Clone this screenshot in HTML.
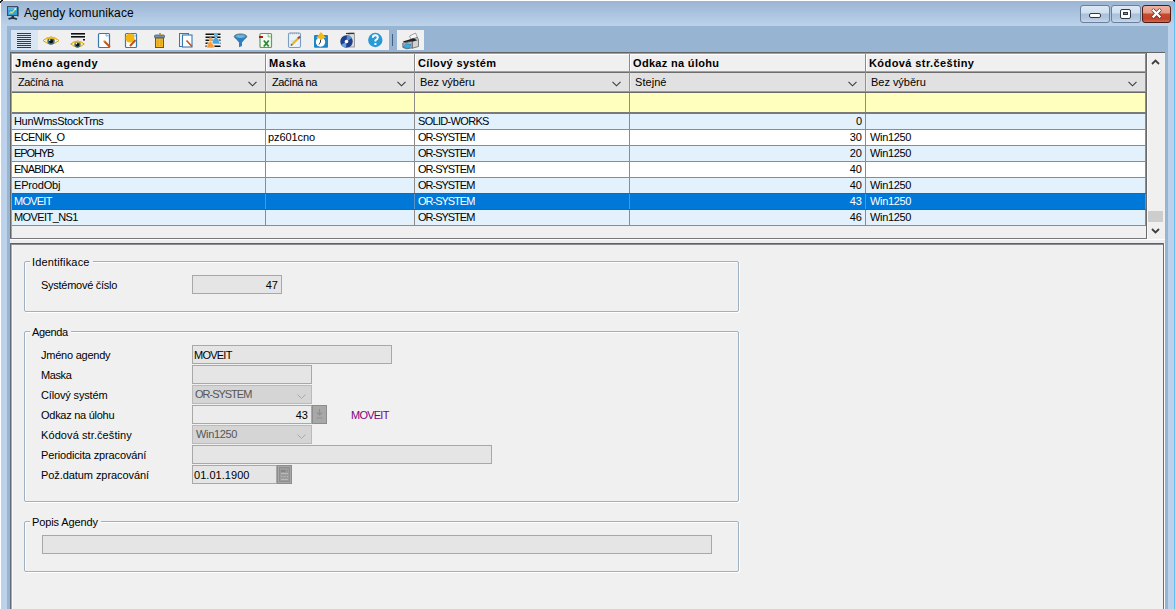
<!DOCTYPE html>
<html><head><meta charset="utf-8">
<style>
*{margin:0;padding:0;box-sizing:border-box}
html,body{width:1175px;height:609px;overflow:hidden;background:#fff}
body{position:relative;font-family:"Liberation Sans",sans-serif;font-size:11px;color:#000}
.a{position:absolute}
svg.a{overflow:visible}
.t{position:absolute;white-space:nowrap;line-height:13px;letter-spacing:-0.15px}
.b{font-weight:bold;letter-spacing:0.4px}
.wb{position:absolute;top:5px;height:18px;border:1px solid #6a7f99;border-radius:3px;background:linear-gradient(#dde8f4,#cfdff0 7px,#a9c0da 8px,#b4c9e0 13px,#c6d8ec)}
.tb{position:absolute;top:30px;height:20px;background:#f0f0f0}
.grp{position:absolute;border:1px solid #9fb0c3;border-radius:2px;box-shadow:inset 1px 1px 0 #fbfdff,1px 1px 0 #fff}
.lg{position:absolute;background:#f0f0f0;padding:0 2px 0 2px;white-space:nowrap;line-height:13px;letter-spacing:-0.15px}
.fld{position:absolute;border:1px solid #a8a8a8;background:#e5e5e5;height:19px}
.cmb{position:absolute;border:1px solid #bababa;background:#d5d5d5;height:19px}
.btn{position:absolute;border:1px solid #8d8d8d;background:#a8a8a8;height:19px}
</style></head><body>

<div class="a" style="left:0px;top:0px;width:1175px;height:609px;background:#fff"></div>
<div class="a" style="left:1px;top:1px;width:1174px;height:608px;background:linear-gradient(#a9b9cb,#9bb5d3 1px,#a5bedb 8px,#bdd3eb 25px,#bcd2ea 26px)"></div>
<div class="a" style="left:0px;top:1px;width:1px;height:2px;background:#111"></div>
<div class="a" style="left:1px;top:0px;width:2px;height:1px;background:#111"></div>
<div class="a" style="left:1px;top:1px;width:1px;height:1px;background:#333"></div>
<div class="a" style="left:1173px;top:0px;width:2px;height:1px;background:#111"></div>
<div class="a" style="left:1174px;top:1px;width:1px;height:1px;background:#333"></div>
<div class="a" style="left:1174px;top:2px;width:1px;height:607px;background:#5cc3f0"></div>
<div class="a" style="left:7px;top:26px;width:1161px;height:583px;background:#98b4d3"></div>
<svg class="a" style="left:7px;top:6px" width="12" height="14" viewBox="0 0 12 14">
<rect x="0.5" y="0.5" width="10" height="9" fill="#3a9fd3" stroke="#3c4e62"/>
<rect x="1" y="1" width="9" height="3" fill="#57b2e0"/>
<path d="M2.5 7.5L4 6L5 7L8 3.5" stroke="#c4dc8a" stroke-width="1.3" fill="none"/>
<circle cx="8.3" cy="3" r="0.9" fill="#e8f4ff"/>
<path d="M11 1v9.5" stroke="#33404e" stroke-width="1.2"/>
<rect x="4.5" y="10" width="2.5" height="2" fill="#26313d"/>
<path d="M1.5 13Q5.5 11 10 13.2" stroke="#2a3541" stroke-width="1.8" fill="none"/></svg>
<div class="t" style="left:24px;top:6px;font-size:12px;line-height:14px;letter-spacing:0.1px;color:#000">Agendy komunikace</div>
<div class="wb" style="left:1080px;width:30px"></div>
<div class="a" style="left:1089px;top:13px;width:12px;height:5px;background:#fff;border:1px solid #2f3a48;border-radius:2px"></div>
<div class="wb" style="left:1111px;width:30px"></div>
<div class="a" style="left:1120px;top:9px;width:11px;height:10px;background:#fff;border:1px solid #2f3a48;border-radius:2px"></div>
<div class="a" style="left:1123px;top:12px;width:5px;height:3px;background:#7d8fa6;border:1px solid #2f3a48"></div>
<div class="wb" style="left:1142px;width:29px;border-color:#4a1c12;background:linear-gradient(#eeb2a2,#e39a86 7px,#c84a2e 8px,#c2432a 13px,#d56a52)"></div>
<svg class="a" style="left:1150px;top:8px" width="13" height="11" viewBox="0 0 13 11"><path d="M3.5 2.5L9.5 8.5M9.5 2.5L3.5 8.5" stroke="#4a2018" stroke-width="3.8" stroke-linecap="round"/><path d="M3.5 2.5L9.5 8.5M9.5 2.5L3.5 8.5" stroke="#fff" stroke-width="2.4" stroke-linecap="square"/></svg>
<div class="tb" style="left:11px;width:378px"></div>
<div class="tb" style="left:397px;width:27px"></div>
<div class="a" style="left:11px;top:30px;width:27px;height:20px;background:#d9e5f2"></div>
<div class="a" style="left:392px;top:34px;width:1px;height:12px;background:#3f5f85"></div>
<svg class="a" style="left:0;top:0" width="430" height="52"><rect x="17" y="33" width="14" height="1" fill="#3a3a3a"/><rect x="17" y="35" width="14" height="1" fill="#3a3a3a"/><rect x="17" y="37" width="14" height="1" fill="#3a3a3a"/><rect x="17" y="39" width="14" height="1" fill="#3a3a3a"/><rect x="17" y="41" width="14" height="1" fill="#3a3a3a"/><rect x="17" y="43" width="14" height="1" fill="#3a3a3a"/><rect x="17" y="45" width="14" height="1" fill="#3a3a3a"/><rect x="17" y="47" width="14" height="1" fill="#3a3a3a"/><path d="M43.0 40.5Q51 33.5 59.0 40.5Q51 47.5 43.0 40.5Z" fill="#fbf0bf" stroke="#d9a514" stroke-width="1"/><circle cx="51" cy="41.1" r="3.7" fill="#3b6d79"/><circle cx="51" cy="41.3" r="2.0" fill="#07121e"/><path d="M43.5 40.2Q51 33.0 58.5 40.2Q51 37.3 43.5 40.2Z" fill="#f0bd1c"/><circle cx="49.7" cy="40.1" r="0.8" fill="#fff"/><rect x="71" y="33" width="14" height="1.6" fill="#111"/><rect x="71" y="36" width="14" height="1.6" fill="#111"/><rect x="83" y="39" width="2" height="1.5" fill="#111"/><path d="M70.7 44Q77.5 38.05 84.3 44Q77.5 49.95 70.7 44Z" fill="#fbf0bf" stroke="#d9a514" stroke-width="1"/><circle cx="77.5" cy="44.51" r="3.145" fill="#3b6d79"/><circle cx="77.5" cy="44.68" r="1.7" fill="#07121e"/><path d="M71.2 43.7Q77.5 37.55 83.8 43.7Q77.5 41.28 71.2 43.7Z" fill="#f0bd1c"/><circle cx="76.395" cy="43.6" r="0.8" fill="#fff"/><rect x="98.5" y="33.5" width="11" height="14" rx="1" fill="#fdfeff" stroke="#3b78ac" stroke-width="1.2"/><path d="M106 34v2h3" fill="#8fc3e8" stroke="#8fc3e8"/><path d="M104 41L110 47" stroke="#c0541a" stroke-width="2"/><path d="M103.5 40.5l1 1" stroke="#f1b98c" stroke-width="2"/><rect x="125.5" y="33.5" width="11" height="14" rx="1" fill="#fdfeff" stroke="#3b78ac" stroke-width="1.2"/><path d="M133 34v2h3" fill="#8fc3e8" stroke="#8fc3e8"/><circle cx="130" cy="38" r="4.5" fill="#f2b60f"/><path d="M135.5 40L130 46" stroke="#c0541a" stroke-width="2"/><rect x="154.5" y="35" width="10" height="3" rx="1" fill="#6f8fae" stroke="#4b6580" stroke-width="0.8"/><rect x="159" y="33" width="2" height="2" fill="#c99c2a"/><rect x="155.5" y="38" width="8" height="9.5" fill="#f2b928" stroke="#4e5a63" stroke-width="1"/><path d="M158 39.5v6.5M161 39.5v6.5" stroke="#d8971a" stroke-width="0.8"/><rect x="179.5" y="33.5" width="9" height="13" fill="#eaf4fb" stroke="#3b78ac"/><rect x="182.5" y="35" width="9.5" height="12" fill="#fdfeff" stroke="#3b78ac" stroke-width="1.1"/><path d="M186.5 40.5L192 46.5" stroke="#c0541a" stroke-width="1.6"/><rect x="205.5" y="33.5" width="15" height="1.5" fill="#111"/><rect x="205.5" y="36.5" width="15" height="1.5" fill="#111"/><rect x="205.5" y="39.5" width="15" height="1.5" fill="#111"/><rect x="205.5" y="42.5" width="15" height="1.5" fill="#111"/><rect x="205.5" y="45.5" width="15" height="1.5" fill="#111"/><path d="M206.6 48Q206.6 42.6 210.5 41.2Q214.4 42.6 214.4 48Z" fill="#f59b38" stroke="#fff" stroke-width="0.6"/><circle cx="210.5" cy="39.3" r="2" fill="#f7a84c"/><path d="M212 43.8Q212 38.4 215.9 37Q219.8 38.4 219.8 43.8Z" fill="#48a4dc" stroke="#fff" stroke-width="0.6"/><circle cx="215.9" cy="34.8" r="2" fill="#66b8e8"/><ellipse cx="240.5" cy="36.5" rx="6.3" ry="2.6" fill="#3d8ac4" stroke="#5b7a6a" stroke-width="0.8"/><path d="M234.2 37L239 42.5V47.2L242 46V42.5L246.8 37Z" fill="#2f7fc0"/><ellipse cx="240.5" cy="36.5" rx="4.5" ry="1.4" fill="#6ab4e6"/><rect x="260" y="33.5" width="11.5" height="14" rx="1" fill="#f4fbf3" stroke="#5f9e5c" stroke-width="1.2"/><rect x="259" y="36" width="4" height="2" fill="#b0161a"/><path d="M263.8 40.5L268.8 46.5M268.8 40.5L263.8 46.5" stroke="#2a8a34" stroke-width="1.8"/><path d="M268 34v3h3" fill="#bfe0bc" stroke="#8fc08c" stroke-width="0.8"/><rect x="288.5" y="33" width="12" height="14.5" rx="1.5" fill="#e9f3fb" stroke="#7c9cc4" stroke-width="1.1"/><path d="M290 33.5h9" stroke="#9aa6b4" stroke-width="1.4" stroke-dasharray="1 1"/><path d="M292 44.5L298.5 38" stroke="#e8b41c" stroke-width="2.2"/><path d="M298 38.5L300 36.5" stroke="#a8482a" stroke-width="2.2"/><path d="M291 45.5L292.2 44.3" stroke="#555" stroke-width="1.6"/><path d="M290.5 41h4M290.5 43.5h2" stroke="#b8cce0" stroke-width="0.8"/><rect x="314" y="35" width="14" height="12.8" rx="1" fill="#1f86c4"/><circle cx="320.5" cy="42" r="4.7" fill="#fff"/><path d="M320.5 42L319 44.5M320.5 42v-2.5" stroke="#223" stroke-width="0.9"/><path d="M321 32L326 38L323 38L322 40L318 38L316 38Z" fill="#f3b91a"/><rect x="349" y="33" width="5.5" height="14" fill="#dcdcdc" stroke="#8a8a8a" stroke-width="0.8"/><path d="M346 33.5h8" stroke="#333" stroke-width="1.2"/><circle cx="346.5" cy="41.5" r="6.2" fill="#1f3f8a"/><path d="M346.5 41.5L352 38A6.2 6.2 0 0 0 347 35.3Z" fill="#5a8fd0"/><path d="M346.5 41.5L341 45A6.2 6.2 0 0 0 346 47.7Z" fill="#6aa0e0"/><circle cx="346.5" cy="41.5" r="1.8" fill="#fff"/><circle cx="375.3" cy="40" r="7.2" fill="#2a9ad6"/><path d="M372.8 37.8Q372.8 35.3 375.3 35.3Q377.8 35.3 377.8 37.6Q377.8 39.2 375.4 40.3V41.6" stroke="#fff" stroke-width="1.9" fill="none"/><rect x="374.4" y="43" width="2" height="2" fill="#fff"/><path d="M409.5 36L415.5 33L417.5 37.5L411.5 40.5Z" fill="#f7f7f7" stroke="#8c8c8c" stroke-width="0.8"/><path d="M411.5 39L417.5 37.5L418.5 40V46.5L412 48.3Z" fill="#cfd3d5" stroke="#5f6468" stroke-width="0.8"/><path d="M402.7 41.5L413.5 38.2L417.5 40.2L406.5 43.6Z" fill="#222"/><path d="M402.8 43L412.3 41.2V47.8L406.5 48.8L402.8 47.4Z" fill="#b1b6ba" stroke="#555a5e" stroke-width="0.8"/><path d="M403.2 47L405.8 43.8L411.2 44.6L408.6 48.6Z" fill="#37aee5" stroke="#1d6d98" stroke-width="0.5"/></svg>
<div class="a" style="left:10px;top:51px;width:1155px;height:189px;background:#f0f0f0"></div>
<div class="a" style="left:10px;top:51px;width:1155px;height:1px;background:#98b4d3"></div>
<div class="a" style="left:10px;top:52px;width:1155px;height:1px;background:#646464"></div>
<div class="a" style="left:11px;top:53px;width:1154px;height:1px;background:#a0a0a0"></div>
<div class="a" style="left:10px;top:52px;width:1px;height:187px;background:#646464"></div>
<div class="a" style="left:11px;top:53px;width:1px;height:186px;background:#a0a0a0"></div>
<div class="a" style="left:1146px;top:53px;width:1px;height:186px;background:#6a6a6a"></div>
<div class="a" style="left:1147px;top:53px;width:1px;height:185px;background:#fafafa"></div>
<div class="a" style="left:10px;top:238px;width:1137px;height:1px;background:#77777c"></div>
<div class="a" style="left:10px;top:239px;width:1155px;height:1px;background:#fdfdfd"></div>
<div class="a" style="left:10px;top:240px;width:1155px;height:3px;background:#ededf0"></div>
<div class="a" style="left:12px;top:54px;width:253px;height:17px;background:#f0f0f0;border-top:1px solid #fff;border-left:1px solid #fff"></div>
<div class="a" style="left:12px;top:71px;width:254px;height:1px;background:#a0a0a0"></div>
<div class="a" style="left:12px;top:72px;width:254px;height:1px;background:#6e6e6e"></div>
<div class="a" style="left:265px;top:54px;width:1px;height:19px;background:#8a8a8a"></div>
<div class="t" style="left:15px;top:57px;font-weight:bold;;letter-spacing:0.51px">Jméno agendy</div>
<div class="a" style="left:12px;top:73px;width:253px;height:18px;background:#e1e1e1;border-left:1px solid #ececec"></div>
<div class="a" style="left:12px;top:91px;width:254px;height:1px;background:#9a9a9a"></div>
<div class="a" style="left:12px;top:92px;width:254px;height:1px;background:#6a6a6a"></div>
<div class="a" style="left:265px;top:73px;width:1px;height:19px;background:#8f8f9a"></div>
<div class="t" style="left:18px;top:76px;;letter-spacing:-0.44px">Začíná na</div>
<svg class="a" style="left:248px;top:81px" width="10" height="6"><path d="M0.5 0.8L4.5 4.8L8.5 0.8" stroke="#3a3a3a" stroke-width="1.1" fill="none"/></svg>
<div class="a" style="left:12px;top:93px;width:253px;height:19px;background:#ffffbe"></div>
<div class="a" style="left:265px;top:93px;width:1px;height:19px;background:#8c8c8c"></div>
<div class="a" style="left:266px;top:54px;width:148px;height:17px;background:#f0f0f0;border-top:1px solid #fff;border-left:1px solid #fff"></div>
<div class="a" style="left:266px;top:71px;width:149px;height:1px;background:#a0a0a0"></div>
<div class="a" style="left:266px;top:72px;width:149px;height:1px;background:#6e6e6e"></div>
<div class="a" style="left:414px;top:54px;width:1px;height:19px;background:#8a8a8a"></div>
<div class="t" style="left:269px;top:57px;font-weight:bold;;letter-spacing:0.7px">Maska</div>
<div class="a" style="left:266px;top:73px;width:148px;height:18px;background:#e1e1e1;border-left:1px solid #ececec"></div>
<div class="a" style="left:266px;top:91px;width:149px;height:1px;background:#9a9a9a"></div>
<div class="a" style="left:266px;top:92px;width:149px;height:1px;background:#6a6a6a"></div>
<div class="a" style="left:414px;top:73px;width:1px;height:19px;background:#8f8f9a"></div>
<div class="t" style="left:272px;top:76px;;letter-spacing:-0.44px">Začíná na</div>
<svg class="a" style="left:397px;top:81px" width="10" height="6"><path d="M0.5 0.8L4.5 4.8L8.5 0.8" stroke="#3a3a3a" stroke-width="1.1" fill="none"/></svg>
<div class="a" style="left:266px;top:93px;width:148px;height:19px;background:#ffffbe"></div>
<div class="a" style="left:414px;top:93px;width:1px;height:19px;background:#8c8c8c"></div>
<div class="a" style="left:415px;top:54px;width:214px;height:17px;background:#f0f0f0;border-top:1px solid #fff;border-left:1px solid #fff"></div>
<div class="a" style="left:415px;top:71px;width:215px;height:1px;background:#a0a0a0"></div>
<div class="a" style="left:415px;top:72px;width:215px;height:1px;background:#6e6e6e"></div>
<div class="a" style="left:629px;top:54px;width:1px;height:19px;background:#8a8a8a"></div>
<div class="t" style="left:418px;top:57px;font-weight:bold;;letter-spacing:0.34px">Cílový systém</div>
<div class="a" style="left:415px;top:73px;width:214px;height:18px;background:#e1e1e1;border-left:1px solid #ececec"></div>
<div class="a" style="left:415px;top:91px;width:215px;height:1px;background:#9a9a9a"></div>
<div class="a" style="left:415px;top:92px;width:215px;height:1px;background:#6a6a6a"></div>
<div class="a" style="left:629px;top:73px;width:1px;height:19px;background:#8f8f9a"></div>
<div class="t" style="left:420px;top:76px;;letter-spacing:-0.03px">Bez výběru</div>
<svg class="a" style="left:612px;top:81px" width="10" height="6"><path d="M0.5 0.8L4.5 4.8L8.5 0.8" stroke="#3a3a3a" stroke-width="1.1" fill="none"/></svg>
<div class="a" style="left:415px;top:93px;width:214px;height:19px;background:#ffffbe"></div>
<div class="a" style="left:629px;top:93px;width:1px;height:19px;background:#8c8c8c"></div>
<div class="a" style="left:630px;top:54px;width:235px;height:17px;background:#f0f0f0;border-top:1px solid #fff;border-left:1px solid #fff"></div>
<div class="a" style="left:630px;top:71px;width:236px;height:1px;background:#a0a0a0"></div>
<div class="a" style="left:630px;top:72px;width:236px;height:1px;background:#6e6e6e"></div>
<div class="a" style="left:865px;top:54px;width:1px;height:19px;background:#8a8a8a"></div>
<div class="t" style="left:633px;top:57px;font-weight:bold;;letter-spacing:0.32px">Odkaz na úlohu</div>
<div class="a" style="left:630px;top:73px;width:235px;height:18px;background:#e1e1e1;border-left:1px solid #ececec"></div>
<div class="a" style="left:630px;top:91px;width:236px;height:1px;background:#9a9a9a"></div>
<div class="a" style="left:630px;top:92px;width:236px;height:1px;background:#6a6a6a"></div>
<div class="a" style="left:865px;top:73px;width:1px;height:19px;background:#8f8f9a"></div>
<div class="t" style="left:635px;top:76px;;letter-spacing:0.06px">Stejné</div>
<svg class="a" style="left:848px;top:81px" width="10" height="6"><path d="M0.5 0.8L4.5 4.8L8.5 0.8" stroke="#3a3a3a" stroke-width="1.1" fill="none"/></svg>
<div class="a" style="left:630px;top:93px;width:235px;height:19px;background:#ffffbe"></div>
<div class="a" style="left:865px;top:93px;width:1px;height:19px;background:#8c8c8c"></div>
<div class="a" style="left:866px;top:54px;width:279px;height:17px;background:#f0f0f0;border-top:1px solid #fff;border-left:1px solid #fff"></div>
<div class="a" style="left:866px;top:71px;width:280px;height:1px;background:#a0a0a0"></div>
<div class="a" style="left:866px;top:72px;width:280px;height:1px;background:#6e6e6e"></div>
<div class="a" style="left:1145px;top:54px;width:1px;height:19px;background:#8a8a8a"></div>
<div class="t" style="left:869px;top:57px;font-weight:bold;;letter-spacing:0.42px">Kódová str.češtiny</div>
<div class="a" style="left:866px;top:73px;width:279px;height:18px;background:#e1e1e1;border-left:1px solid #ececec"></div>
<div class="a" style="left:866px;top:91px;width:280px;height:1px;background:#9a9a9a"></div>
<div class="a" style="left:866px;top:92px;width:280px;height:1px;background:#6a6a6a"></div>
<div class="a" style="left:1145px;top:73px;width:1px;height:19px;background:#8f8f9a"></div>
<div class="t" style="left:871px;top:76px;;letter-spacing:-0.03px">Bez výběru</div>
<svg class="a" style="left:1128px;top:81px" width="10" height="6"><path d="M0.5 0.8L4.5 4.8L8.5 0.8" stroke="#3a3a3a" stroke-width="1.1" fill="none"/></svg>
<div class="a" style="left:866px;top:93px;width:279px;height:19px;background:#ffffbe"></div>
<div class="a" style="left:1145px;top:93px;width:1px;height:19px;background:#8c8c8c"></div>
<div class="a" style="left:12px;top:112px;width:1134px;height:2px;background:#7a7a7a"></div>
<div class="a" style="left:12px;top:114px;width:253px;height:15px;background:#e3f1fc"></div>
<div class="a" style="left:265px;top:114px;width:1px;height:16px;background:#8c8c8c"></div>
<div class="a" style="left:12px;top:129px;width:254px;height:1px;background:#8c8c8c"></div>
<div class="t" style="left:14px;top:115px;color:#000;;letter-spacing:-0.32px">HunWmsStockTrns</div>
<div class="a" style="left:266px;top:114px;width:148px;height:15px;background:#e3f1fc"></div>
<div class="a" style="left:414px;top:114px;width:1px;height:16px;background:#8c8c8c"></div>
<div class="a" style="left:266px;top:129px;width:149px;height:1px;background:#8c8c8c"></div>
<div class="a" style="left:415px;top:114px;width:214px;height:15px;background:#e3f1fc"></div>
<div class="a" style="left:629px;top:114px;width:1px;height:16px;background:#8c8c8c"></div>
<div class="a" style="left:415px;top:129px;width:215px;height:1px;background:#8c8c8c"></div>
<div class="t" style="left:418px;top:115px;color:#000;;letter-spacing:-0.68px">SOLID-WORKS</div>
<div class="a" style="left:630px;top:114px;width:235px;height:15px;background:#e3f1fc"></div>
<div class="a" style="left:865px;top:114px;width:1px;height:16px;background:#8c8c8c"></div>
<div class="a" style="left:630px;top:129px;width:236px;height:1px;background:#8c8c8c"></div>
<div class="t" style="left:630px;width:232px;text-align:right;top:115px;color:#000;letter-spacing:0">0</div>
<div class="a" style="left:866px;top:114px;width:279px;height:15px;background:#e3f1fc"></div>
<div class="a" style="left:1145px;top:114px;width:1px;height:16px;background:#8c8c8c"></div>
<div class="a" style="left:866px;top:129px;width:280px;height:1px;background:#8c8c8c"></div>
<div class="a" style="left:12px;top:130px;width:253px;height:15px;background:#ffffff"></div>
<div class="a" style="left:265px;top:130px;width:1px;height:16px;background:#8c8c8c"></div>
<div class="a" style="left:12px;top:145px;width:254px;height:1px;background:#8c8c8c"></div>
<div class="t" style="left:14px;top:131px;color:#000;;letter-spacing:-0.64px">ECENIK_O</div>
<div class="a" style="left:266px;top:130px;width:148px;height:15px;background:#ffffff"></div>
<div class="a" style="left:414px;top:130px;width:1px;height:16px;background:#8c8c8c"></div>
<div class="a" style="left:266px;top:145px;width:149px;height:1px;background:#8c8c8c"></div>
<div class="t" style="left:268px;top:131px;color:#000;;letter-spacing:-0.09px">pz601cno</div>
<div class="a" style="left:415px;top:130px;width:214px;height:15px;background:#ffffff"></div>
<div class="a" style="left:629px;top:130px;width:1px;height:16px;background:#8c8c8c"></div>
<div class="a" style="left:415px;top:145px;width:215px;height:1px;background:#8c8c8c"></div>
<div class="t" style="left:418px;top:131px;color:#000;;letter-spacing:-1.01px">OR-SYSTEM</div>
<div class="a" style="left:630px;top:130px;width:235px;height:15px;background:#ffffff"></div>
<div class="a" style="left:865px;top:130px;width:1px;height:16px;background:#8c8c8c"></div>
<div class="a" style="left:630px;top:145px;width:236px;height:1px;background:#8c8c8c"></div>
<div class="t" style="left:630px;width:232px;text-align:right;top:131px;color:#000;letter-spacing:0">30</div>
<div class="a" style="left:866px;top:130px;width:279px;height:15px;background:#ffffff"></div>
<div class="a" style="left:1145px;top:130px;width:1px;height:16px;background:#8c8c8c"></div>
<div class="a" style="left:866px;top:145px;width:280px;height:1px;background:#8c8c8c"></div>
<div class="t" style="left:870px;top:131px;color:#000;;letter-spacing:-0.33px">Win1250</div>
<div class="a" style="left:12px;top:146px;width:253px;height:15px;background:#e3f1fc"></div>
<div class="a" style="left:265px;top:146px;width:1px;height:16px;background:#8c8c8c"></div>
<div class="a" style="left:12px;top:161px;width:254px;height:1px;background:#8c8c8c"></div>
<div class="t" style="left:14px;top:147px;color:#000;;letter-spacing:-1.1px">EPOHYB</div>
<div class="a" style="left:266px;top:146px;width:148px;height:15px;background:#e3f1fc"></div>
<div class="a" style="left:414px;top:146px;width:1px;height:16px;background:#8c8c8c"></div>
<div class="a" style="left:266px;top:161px;width:149px;height:1px;background:#8c8c8c"></div>
<div class="a" style="left:415px;top:146px;width:214px;height:15px;background:#e3f1fc"></div>
<div class="a" style="left:629px;top:146px;width:1px;height:16px;background:#8c8c8c"></div>
<div class="a" style="left:415px;top:161px;width:215px;height:1px;background:#8c8c8c"></div>
<div class="t" style="left:418px;top:147px;color:#000;;letter-spacing:-1.01px">OR-SYSTEM</div>
<div class="a" style="left:630px;top:146px;width:235px;height:15px;background:#e3f1fc"></div>
<div class="a" style="left:865px;top:146px;width:1px;height:16px;background:#8c8c8c"></div>
<div class="a" style="left:630px;top:161px;width:236px;height:1px;background:#8c8c8c"></div>
<div class="t" style="left:630px;width:232px;text-align:right;top:147px;color:#000;letter-spacing:0">20</div>
<div class="a" style="left:866px;top:146px;width:279px;height:15px;background:#e3f1fc"></div>
<div class="a" style="left:1145px;top:146px;width:1px;height:16px;background:#8c8c8c"></div>
<div class="a" style="left:866px;top:161px;width:280px;height:1px;background:#8c8c8c"></div>
<div class="t" style="left:870px;top:147px;color:#000;;letter-spacing:-0.33px">Win1250</div>
<div class="a" style="left:12px;top:162px;width:253px;height:15px;background:#ffffff"></div>
<div class="a" style="left:265px;top:162px;width:1px;height:16px;background:#8c8c8c"></div>
<div class="a" style="left:12px;top:177px;width:254px;height:1px;background:#8c8c8c"></div>
<div class="t" style="left:14px;top:163px;color:#000;;letter-spacing:-0.8px">ENABIDKA</div>
<div class="a" style="left:266px;top:162px;width:148px;height:15px;background:#ffffff"></div>
<div class="a" style="left:414px;top:162px;width:1px;height:16px;background:#8c8c8c"></div>
<div class="a" style="left:266px;top:177px;width:149px;height:1px;background:#8c8c8c"></div>
<div class="a" style="left:415px;top:162px;width:214px;height:15px;background:#ffffff"></div>
<div class="a" style="left:629px;top:162px;width:1px;height:16px;background:#8c8c8c"></div>
<div class="a" style="left:415px;top:177px;width:215px;height:1px;background:#8c8c8c"></div>
<div class="t" style="left:418px;top:163px;color:#000;;letter-spacing:-1.01px">OR-SYSTEM</div>
<div class="a" style="left:630px;top:162px;width:235px;height:15px;background:#ffffff"></div>
<div class="a" style="left:865px;top:162px;width:1px;height:16px;background:#8c8c8c"></div>
<div class="a" style="left:630px;top:177px;width:236px;height:1px;background:#8c8c8c"></div>
<div class="t" style="left:630px;width:232px;text-align:right;top:163px;color:#000;letter-spacing:0">40</div>
<div class="a" style="left:866px;top:162px;width:279px;height:15px;background:#ffffff"></div>
<div class="a" style="left:1145px;top:162px;width:1px;height:16px;background:#8c8c8c"></div>
<div class="a" style="left:866px;top:177px;width:280px;height:1px;background:#8c8c8c"></div>
<div class="a" style="left:12px;top:178px;width:253px;height:15px;background:#e3f1fc"></div>
<div class="a" style="left:265px;top:178px;width:1px;height:16px;background:#8c8c8c"></div>
<div class="a" style="left:12px;top:193px;width:254px;height:1px;background:#33628f"></div>
<div class="t" style="left:14px;top:179px;color:#000;;letter-spacing:-0.17px">EProdObj</div>
<div class="a" style="left:266px;top:178px;width:148px;height:15px;background:#e3f1fc"></div>
<div class="a" style="left:414px;top:178px;width:1px;height:16px;background:#8c8c8c"></div>
<div class="a" style="left:266px;top:193px;width:149px;height:1px;background:#33628f"></div>
<div class="a" style="left:415px;top:178px;width:214px;height:15px;background:#e3f1fc"></div>
<div class="a" style="left:629px;top:178px;width:1px;height:16px;background:#8c8c8c"></div>
<div class="a" style="left:415px;top:193px;width:215px;height:1px;background:#33628f"></div>
<div class="t" style="left:418px;top:179px;color:#000;;letter-spacing:-1.01px">OR-SYSTEM</div>
<div class="a" style="left:630px;top:178px;width:235px;height:15px;background:#e3f1fc"></div>
<div class="a" style="left:865px;top:178px;width:1px;height:16px;background:#8c8c8c"></div>
<div class="a" style="left:630px;top:193px;width:236px;height:1px;background:#33628f"></div>
<div class="t" style="left:630px;width:232px;text-align:right;top:179px;color:#000;letter-spacing:0">40</div>
<div class="a" style="left:866px;top:178px;width:279px;height:15px;background:#e3f1fc"></div>
<div class="a" style="left:1145px;top:178px;width:1px;height:16px;background:#8c8c8c"></div>
<div class="a" style="left:866px;top:193px;width:280px;height:1px;background:#33628f"></div>
<div class="t" style="left:870px;top:179px;color:#000;;letter-spacing:-0.33px">Win1250</div>
<div class="a" style="left:12px;top:194px;width:253px;height:15px;background:#0078d7"></div>
<div class="a" style="left:265px;top:194px;width:1px;height:16px;background:#5b93c6"></div>
<div class="a" style="left:12px;top:209px;width:254px;height:1px;background:#33628f"></div>
<div class="t" style="left:14px;top:195px;color:#fff;;letter-spacing:-0.76px">MOVEIT</div>
<div class="a" style="left:266px;top:194px;width:148px;height:15px;background:#0078d7"></div>
<div class="a" style="left:414px;top:194px;width:1px;height:16px;background:#5b93c6"></div>
<div class="a" style="left:266px;top:209px;width:149px;height:1px;background:#33628f"></div>
<div class="a" style="left:415px;top:194px;width:214px;height:15px;background:#0078d7"></div>
<div class="a" style="left:629px;top:194px;width:1px;height:16px;background:#5b93c6"></div>
<div class="a" style="left:415px;top:209px;width:215px;height:1px;background:#33628f"></div>
<div class="t" style="left:418px;top:195px;color:#fff;;letter-spacing:-1.01px">OR-SYSTEM</div>
<div class="a" style="left:630px;top:194px;width:235px;height:15px;background:#0078d7"></div>
<div class="a" style="left:865px;top:194px;width:1px;height:16px;background:#5b93c6"></div>
<div class="a" style="left:630px;top:209px;width:236px;height:1px;background:#33628f"></div>
<div class="t" style="left:630px;width:232px;text-align:right;top:195px;color:#fff;letter-spacing:0">43</div>
<div class="a" style="left:866px;top:194px;width:279px;height:15px;background:#0078d7"></div>
<div class="a" style="left:1145px;top:194px;width:1px;height:16px;background:#5b93c6"></div>
<div class="a" style="left:866px;top:209px;width:280px;height:1px;background:#33628f"></div>
<div class="t" style="left:870px;top:195px;color:#fff;;letter-spacing:-0.33px">Win1250</div>
<div class="a" style="left:12px;top:210px;width:253px;height:15px;background:#e3f1fc"></div>
<div class="a" style="left:265px;top:210px;width:1px;height:16px;background:#8c8c8c"></div>
<div class="a" style="left:12px;top:225px;width:254px;height:1px;background:#8c8c8c"></div>
<div class="t" style="left:14px;top:211px;color:#000;;letter-spacing:-0.58px">MOVEIT_NS1</div>
<div class="a" style="left:266px;top:210px;width:148px;height:15px;background:#e3f1fc"></div>
<div class="a" style="left:414px;top:210px;width:1px;height:16px;background:#8c8c8c"></div>
<div class="a" style="left:266px;top:225px;width:149px;height:1px;background:#8c8c8c"></div>
<div class="a" style="left:415px;top:210px;width:214px;height:15px;background:#e3f1fc"></div>
<div class="a" style="left:629px;top:210px;width:1px;height:16px;background:#8c8c8c"></div>
<div class="a" style="left:415px;top:225px;width:215px;height:1px;background:#8c8c8c"></div>
<div class="t" style="left:418px;top:211px;color:#000;;letter-spacing:-1.01px">OR-SYSTEM</div>
<div class="a" style="left:630px;top:210px;width:235px;height:15px;background:#e3f1fc"></div>
<div class="a" style="left:865px;top:210px;width:1px;height:16px;background:#8c8c8c"></div>
<div class="a" style="left:630px;top:225px;width:236px;height:1px;background:#8c8c8c"></div>
<div class="t" style="left:630px;width:232px;text-align:right;top:211px;color:#000;letter-spacing:0">46</div>
<div class="a" style="left:866px;top:210px;width:279px;height:15px;background:#e3f1fc"></div>
<div class="a" style="left:1145px;top:210px;width:1px;height:16px;background:#8c8c8c"></div>
<div class="a" style="left:866px;top:225px;width:280px;height:1px;background:#8c8c8c"></div>
<div class="t" style="left:870px;top:211px;color:#000;;letter-spacing:-0.33px">Win1250</div>
<div class="a" style="left:1148px;top:53px;width:17px;height:185px;background:#f0f0f0"></div>
<svg class="a" style="left:1151px;top:59px" width="9" height="6"><path d="M1 5L4.5 1.5L8 5" stroke="#404040" stroke-width="1.8" fill="none"/></svg>
<svg class="a" style="left:1151px;top:228px" width="9" height="6"><path d="M1 1L4.5 4.5L8 1" stroke="#404040" stroke-width="1.8" fill="none"/></svg>
<div class="a" style="left:1148px;top:211px;width:15px;height:11px;background:#cdcdcd"></div>
<div class="a" style="left:10px;top:243px;width:1155px;height:366px;background:#f0f0f0"></div>
<div class="a" style="left:10px;top:243px;width:1154px;height:1px;background:#5f5f64"></div>
<div class="a" style="left:11px;top:244px;width:1153px;height:1px;background:#8c8c90"></div>
<div class="a" style="left:10px;top:243px;width:1px;height:366px;background:#636975"></div>
<div class="a" style="left:11px;top:245px;width:1px;height:364px;background:#acacae"></div>
<div class="a" style="left:12px;top:245px;width:1px;height:364px;background:#f8f8f8"></div>
<div class="a" style="left:1163px;top:243px;width:1px;height:366px;background:#6e6e6e"></div>
<div class="a" style="left:1164px;top:243px;width:1px;height:366px;background:#fafafa"></div>
<div class="grp" style="left:24px;top:261px;width:715px;height:51px"></div>
<div class="lg" style="left:30px;top:256px;letter-spacing:0.16px;padding-right:3px">Identifikace</div>
<div class="grp" style="left:24px;top:331px;width:715px;height:171px"></div>
<div class="lg" style="left:30px;top:326px;letter-spacing:-0.34px;padding-right:3px">Agenda</div>
<div class="grp" style="left:24px;top:521px;width:715px;height:51px"></div>
<div class="lg" style="left:30px;top:516px;letter-spacing:-0.11px;padding-right:3px">Popis Agendy</div>
<div class="t" style="left:41px;top:279px;;letter-spacing:-0.27px">Systémové číslo</div>
<div class="fld" style="left:192px;top:275px;width:90px"></div>
<div class="t" style="left:192px;width:86px;text-align:right;top:279px;letter-spacing:0">47</div>
<div class="t" style="left:41px;top:349px;;letter-spacing:-0.24px">Jméno agendy</div>
<div class="t" style="left:41px;top:369px;;letter-spacing:-0.4px">Maska</div>
<div class="t" style="left:41px;top:389px;;letter-spacing:-0.15px">Cílový systém</div>
<div class="t" style="left:41px;top:409px;;letter-spacing:-0.27px">Odkaz na úlohu</div>
<div class="t" style="left:41px;top:429px;;letter-spacing:0.09px">Kódová str.češtiny</div>
<div class="t" style="left:41px;top:449px;;letter-spacing:-0.14px">Periodicita zpracování</div>
<div class="t" style="left:41px;top:469px;;letter-spacing:-0.07px">Pož.datum zpracování</div>
<div class="fld" style="left:192px;top:345px;width:200px"></div>
<div class="t" style="left:194px;top:349px;;letter-spacing:-0.76px">MOVEIT</div>
<div class="fld" style="left:192px;top:365px;width:120px"></div>
<div class="cmb" style="left:192px;top:385px;width:120px"></div>
<div class="t" style="left:195px;top:388px;color:#555;letter-spacing:-1.01px">OR-SYSTEM</div>
<svg class="a" style="left:297px;top:394px" width="9" height="5"><path d="M0.5 0.5L4.5 4.5L8.5 0.5" stroke="#a8a8a8" fill="none"/></svg>
<div class="fld" style="left:192px;top:405px;width:120px;background:#ececec"></div>
<div class="t" style="left:192px;width:116px;text-align:right;top:409px;letter-spacing:0">43</div>
<div class="btn" style="left:312px;top:405px;width:15px"></div>
<svg class="a" style="left:315px;top:408px" width="9" height="12"><path d="M4.5 1v6M2 4.5L4.5 7L7 4.5M1.5 10h6" stroke="#909090" stroke-width="1.2" fill="none"/></svg>
<div class="t" style="left:351px;top:409px;color:#800080;letter-spacing:-0.76px">MOVEIT</div>
<div class="cmb" style="left:192px;top:425px;width:120px"></div>
<div class="t" style="left:196px;top:428px;color:#555;letter-spacing:-0.33px">Win1250</div>
<svg class="a" style="left:297px;top:434px" width="9" height="5"><path d="M0.5 0.5L4.5 4.5L8.5 0.5" stroke="#a8a8a8" fill="none"/></svg>
<div class="fld" style="left:192px;top:445px;width:300px"></div>
<div class="fld" style="left:192px;top:465px;width:85px"></div>
<div class="t" style="left:194px;top:469px;;letter-spacing:0.04px">01.01.1900</div>
<div class="btn" style="left:277px;top:465px;width:15px"></div>
<svg class="a" style="left:279px;top:466px" width="11" height="16"><rect x="0.5" y="1.5" width="10" height="14" fill="#9c9c9c" stroke="#8e8e8e"/><rect x="2" y="4" width="4" height="2" fill="#858585"/><rect x="6" y="4" width="3" height="2" fill="#959595"/><path d="M2 7.5h7M2 10.5h7M2 13.5h7M4.5 7v7M6.5 7v7" stroke="#b9b9b9" stroke-width="1"/><path d="M4 9h3v3h-3z" fill="none" stroke="#8a8a8a" stroke-width="0.8"/></svg>
<div class="fld" style="left:42px;top:535px;width:670px"></div>
</body></html>
